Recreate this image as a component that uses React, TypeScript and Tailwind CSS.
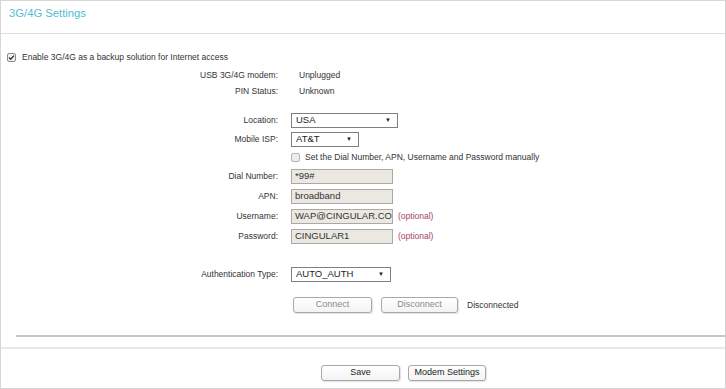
import type { ReactNode } from 'react';

const font = { fontFamily: '"Liberation Sans", Arial, sans-serif' };

function CheckBox({ checked }: { checked?: boolean }) {
  return (
    <svg width="9" height="9" viewBox="0 0 9 9" className="shrink-0">
      <rect x="0.5" y="0.5" width="8" height="8" rx="1.5" fill={checked ? '#f2f2f2' : '#ececec'} stroke={checked ? '#8a8a8a' : '#b4b4b4'} />
      {checked && <path d="M2 4.6 L3.7 6.3 L7 2.6" fill="none" stroke="#333" strokeWidth="1.4" />}
    </svg>
  );
}

function Row({ label, children, className = '' }: { label?: string; children: ReactNode; className?: string }) {
  return (
    <div className={`flex items-center h-[16px] ${className}`}>
      <div className="w-[277px] shrink-0 text-right">{label}</div>
      <div className="ml-[13px] flex items-center">{children}</div>
    </div>
  );
}

function Select({ value, width }: { value: string; width: string }) {
  return (
    <div className={`${width} h-[15px] border border-[#7f7f7f] bg-white flex items-center justify-between pl-[4px] pr-[6px] text-[9.5px] text-[#222]`}>
      <span>{value}</span>
      <span className="text-[6px] text-[#222]">▼</span>
    </div>
  );
}

function Field({ value }: { value: string }) {
  return (
    <div className="w-[102px] h-[15px] border border-[#a9a9a9] bg-[#ebe8e2] flex items-center pl-[3px] overflow-hidden whitespace-nowrap text-[9.5px] text-[#333]">
      {value}
    </div>
  );
}

function Button({ children, width, disabled }: { children: ReactNode; width: string; disabled?: boolean }) {
  return (
    <div
      className={`${width} h-[16px] rounded-[3px] border border-[#a8a8a8] bg-gradient-to-b from-white to-[#f3f3f3] shadow-[1px_1px_1px_rgba(0,0,0,0.12)] flex items-center justify-center text-[9px] ${disabled ? 'text-[#8a8a8a]' : 'text-[#222]'}`}
    >
      {children}
    </div>
  );
}

export default function App() {
  return (
    <div style={font} className="w-[726px] h-[389px] bg-white border border-[#d6d6d6] flex flex-col text-[8.5px] text-[#333] overflow-hidden">
      <div className="h-[33px] shrink-0 border-b border-[#dedede] pl-[8px] pt-[5px]">
        <div className="text-[11.25px] leading-[14px] text-[#4fbfd0]">3G/4G Settings</div>
      </div>

      <div className="flex items-center h-[16px] mt-[15px] pl-[6px]">
        <CheckBox checked />
        <span className="ml-[6px]">Enable 3G/4G as a backup solution for Internet access</span>
      </div>

      <div className="flex items-center h-[16px] mt-[2px]">
        <div className="w-[277px] text-right">USB 3G/4G modem:</div>
        <div className="ml-[21px]">Unplugged</div>
      </div>
      <div className="flex items-center h-[16px]">
        <div className="w-[277px] text-right">PIN Status:</div>
        <div className="ml-[21px]">Unknown</div>
      </div>

      <Row label="Location:" className="mt-[13px]">
        <Select value="USA" width="w-[107px]" />
      </Row>
      <Row label="Mobile ISP:" className="mt-[3px]">
        <Select value="AT&T" width="w-[68px]" />
      </Row>
      <Row className="mt-[2px]">
        <CheckBox />
        <span className="ml-[5px]">Set the Dial Number, APN, Username and Password manually</span>
      </Row>
      <Row label="Dial Number:" className="mt-[3px]">
        <Field value="*99#" />
      </Row>
      <Row label="APN:" className="mt-[4px]">
        <Field value="broadband" />
      </Row>
      <Row label="Username:" className="mt-[4px]">
        <Field value="WAP@CINGULAR.COM" />
        <span className="ml-[5px] text-[#a8406a]">(optional)</span>
      </Row>
      <Row label="Password:" className="mt-[4px]">
        <Field value="CINGULAR1" />
        <span className="ml-[5px] text-[#a8406a]">(optional)</span>
      </Row>

      <Row label="Authentication Type:" className="mt-[22px]">
        <Select value="AUTO_AUTH" width="w-[100px]" />
      </Row>

      <Row className="mt-[15px]">
        <div className="ml-[2px] flex items-center gap-[9px]">
          <Button width="w-[79px]" disabled>Connect</Button>
          <Button width="w-[77px]" disabled>Disconnect</Button>
          <span>Disconnected</span>
        </div>
      </Row>

      <div className="mt-[22px] ml-[15px] h-[2px] bg-[#c6c6c6]" />
      <div className="mt-[10px] h-[2px] bg-[#e8e8e8]" />

      <div className="mt-[16px] pl-[320px] flex items-center gap-[8px]">
        <Button width="w-[79px]">Save</Button>
        <Button width="w-[78px]">Modem Settings</Button>
      </div>
    </div>
  );
}
